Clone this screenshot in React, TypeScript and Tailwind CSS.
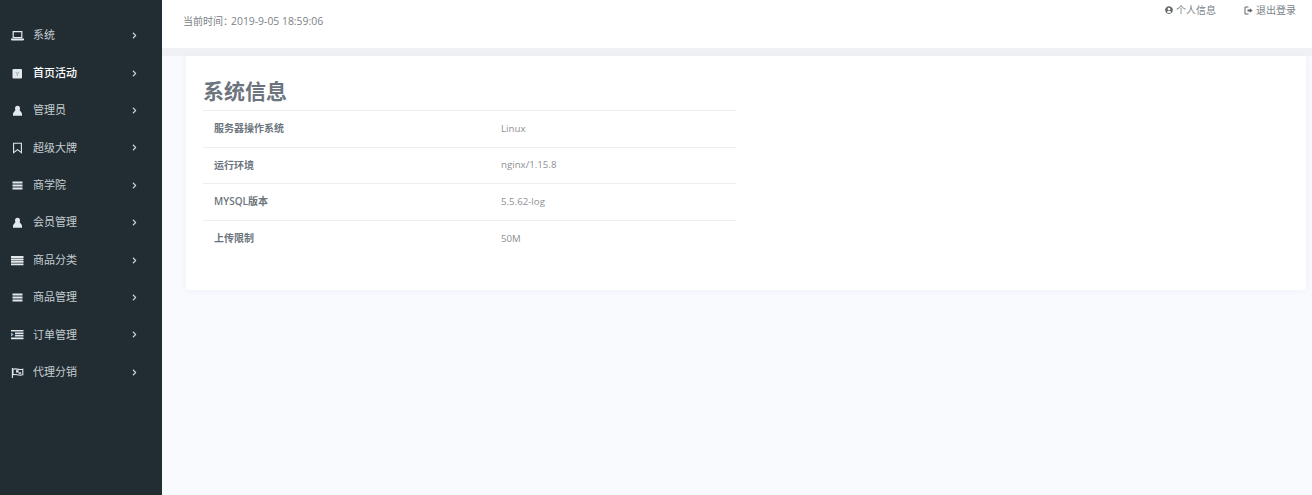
import { FaChevronRight, FaUserCircle } from 'react-icons/fa';
import type { ReactNode } from 'react';

// menu icons are drawn on a 13x13 grid to follow the old icon font shapes
const ICONS: Record<string, ReactNode> = {
  laptop: (
    <>
      <path d="M2.2 2.7h8.6v6H2.2z" fill="none" stroke="currentColor" strokeWidth="1.2" />
      <path d="M0 9.6h13v1.2l-.8.7H.8L0 10.8z" fill="currentColor" />
    </>
  ),
  calendar: (
    <>
      <rect x="1.5" y="2" width="9.5" height="9.5" rx="1" fill="currentColor" />
      <path d="M4.8 5l1.5 2 1.5-2M6.3 7v2" fill="none" stroke="#9aa3a8" strokeWidth="0.9" />
    </>
  ),
  user: (
    <>
      <circle cx="6.5" cy="4.2" r="2.5" fill="currentColor" />
      <path d="M4.6 5.8h3.8L11 9.2v2.6H2V9.2z" fill="currentColor" />
    </>
  ),
  bookmark: (
    <path d="M2.6 2.2h7.8v9.4L6.5 8.6l-3.9 3z" fill="none" stroke="currentColor" strokeWidth="1.1" />
  ),
  bars: (
    <path d="M1.5 2.6h10v1.8h-10zM1.5 5.6h10v1.8h-10zM1.5 8.6h10v1.8h-10z" fill="currentColor" />
  ),
  list: (
    <path d="M0 2h12.5v2H0zM0 4.6h12.5v1.8H0zM0 7h12.5v1.8H0zM0 9.4h12.5v1.8H0z" fill="currentColor" />
  ),
  indent: (
    <>
      <path d="M0 2h12.5v1.6H0zM4 4.6h8.5v1.6H4zM4 7h8.5v1.6H4zM0 9.6h12.5v1.6H0z" fill="currentColor" />
      <path d="M0 4.4l2.8 2L0 8.4z" fill="#8fb0d0" />
    </>
  ),
  flag: (
    <>
      <path d="M1.4 2v10" stroke="currentColor" strokeWidth="1.1" />
      <path d="M2 3.2c3-1.2 4.8 1.2 9.8 0v5.6c-4.6 1.3-6.6-1.2-9.8 0z" fill="none" stroke="currentColor" strokeWidth="1.1" />
      <path d="M5 4.2h2.6v2.2H5zM7.6 6.2h2.6v1.6H7.6z" fill="currentColor" />
    </>
  ),
};

const MENU: { label: string; icon: string; bold?: boolean }[] = [
  { label: '系统', icon: 'laptop' },
  { label: '首页活动', icon: 'calendar', bold: true },
  { label: '管理员', icon: 'user' },
  { label: '超级大牌', icon: 'bookmark' },
  { label: '商学院', icon: 'bars' },
  { label: '会员管理', icon: 'user' },
  { label: '商品分类', icon: 'list' },
  { label: '商品管理', icon: 'bars' },
  { label: '订单管理', icon: 'indent' },
  { label: '代理分销', icon: 'flag' },
];

const ROWS = [
  ['服务器操作系统', 'Linux'],
  ['运行环境', 'nginx/1.15.8'],
  ['MYSQL版本', '5.5.62-log'],
  ['上传限制', '50M'],
];

export default function App() {
  return (
    <div className="flex h-[495px] w-[1312px] overflow-hidden bg-[#f9fafe] font-['Open_Sans','Noto_Sans_CJK_SC',sans-serif]">
      {/* Sidebar */}
      <aside className="w-[162px] shrink-0 bg-[#222d33] pt-[17px]">
        {MENU.map((item) => (
          <div key={item.label} className="flex h-[37.4px] items-center pl-[11px] pr-[24px] text-[#c4ccd0]">
            <svg viewBox="0 0 13 13" className="h-[13px] w-[13px] shrink-0 text-[#e2e8ec]">
              {ICONS[item.icon]}
            </svg>
            <span className={`ml-[9px] flex-1 text-[11px] ${item.bold ? 'font-medium text-white' : ''}`}>{item.label}</span>
            <FaChevronRight className="h-[7px] w-[7px] text-[#d5dadd]" />
          </div>
        ))}
      </aside>

      <main className="flex min-w-0 flex-1 flex-col">
        {/* Header */}
        <header className="relative h-[48px] shrink-0 bg-white pl-[21px] pt-[15px] text-[10px] leading-[12px] text-[#7b8287]">
          当前时间：<span className="-ml-[2px] text-[10.4px]">2019-9-05 18:59:06</span>
          <div className="absolute right-[16px] top-[4px] flex gap-[28px]">
            <span className="flex items-center gap-[3px]">
              <FaUserCircle className="h-[8px] w-[8px] text-[#5f676c]" />
              个人信息
            </span>
            <span className="flex items-center gap-[3px]">
              <svg viewBox="0 0 9 9" className="h-[9px] w-[9px] text-[#5f676c]">
                <path d="M4.5 1H1v7h3.5" fill="none" stroke="currentColor" strokeWidth="1" />
                <path d="M3.5 3.6h2.4V2.2L8.6 4.5 5.9 6.8V5.4H3.5z" fill="currentColor" />
              </svg>
              退出登录
            </span>
          </div>
        </header>

        {/* Content */}
        <div className="h-[8px] shrink-0 bg-[#f0f1f5]" />
        <section className="ml-[24px] mr-[6px] h-[234px] rounded-[3px] bg-white pl-[17px] pt-[22px] shadow-[0_0_6px_rgba(230,233,242,0.6)]">
          <h1 className="h-[32px] text-[21px] font-bold leading-[26px] text-[#6c757d]">系统信息</h1>
          <table className="w-[533px] border-collapse text-[10px]">
            <tbody>
              {ROWS.map(([name, value]) => (
                <tr key={name} className="h-[36.5px] border-t border-[#ebedf0]">
                  <td className="w-[298px] pl-[11px] font-semibold text-[#6c757d]">{name}</td>
                  <td className="pt-[1px] text-[9.7px] text-[#8d9093]">{value}</td>
                </tr>
              ))}
            </tbody>
          </table>
        </section>
      </main>
    </div>
  );
}
